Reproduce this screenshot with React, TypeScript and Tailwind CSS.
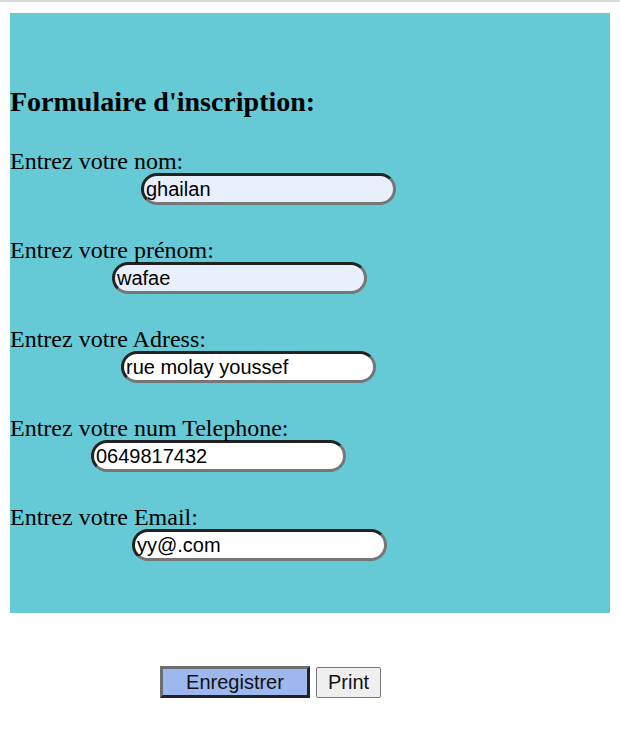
import React from "react";

const rows = [
  { label: "Entrez votre nom:", value: "ghailan", ml: "ml-[131px]", bg: "bg-[#e8f0fe]" },
  { label: "Entrez votre prénom:", value: "wafae", ml: "ml-[102px]", bg: "bg-[#e8f0fe]" },
  { label: "Entrez votre Adress:", value: "rue molay youssef", ml: "ml-[111px]", bg: "bg-white" },
  { label: "Entrez votre num Telephone:", value: "0649817432", ml: "ml-[81px]", bg: "bg-white" },
  { label: "Entrez votre Email:", value: "yy@.com", ml: "ml-[122px]", bg: "bg-white" },
];

export default function App() {
  return (
    <div className="w-[620px] h-[756px] bg-white" style={{ fontFamily: '"Liberation Serif", "Times New Roman", serif' }}>
      <div className="h-[2px] bg-[#dadadd]" />
      <div className="ml-[10px] mt-[11px] w-[600px] h-[600px] bg-[#66c9d6] pt-[75px] text-black">
        <h2 className="text-[28px] font-bold leading-[28px] h-[28px]">Formulaire d'inscription:</h2>
        <div className="mt-[33px]">
          {rows.map((r) => (
            <div key={r.label} className="mb-[33px]">
              <div className="text-[24px] leading-[24px] h-[24px]">{r.label}</div>
              <div
                className={`${r.ml} ${r.bg} w-[255px] h-[32px] rounded-full border-[3px] border-t-[#222] border-l-[#222] border-b-[#767676] border-r-[#767676] pl-[2px] flex items-center text-[20px] leading-none text-black`}
                style={{ fontFamily: '"Liberation Sans", Arial, sans-serif' }}
              >
                {r.value}
              </div>
            </div>
          ))}
        </div>
      </div>
      <div className="mt-[53px] ml-[160px] flex items-end" style={{ fontFamily: '"Liberation Sans", Arial, sans-serif' }}>
        <button className="w-[150px] h-[32px] bg-[#9db8ee] border-[3px] border-t-[#6e6e6e] border-l-[#6e6e6e] border-b-[#222] border-r-[#222] text-[20px] leading-none text-[#111] flex items-center justify-center">
          Enregistrer
        </button>
        <button className="ml-[6px] w-[65px] h-[31px] bg-[#efefef] border border-[#767676] rounded-[2px] text-[20px] leading-none text-[#111] flex items-center justify-center pb-[2px]">
          Print
        </button>
      </div>
    </div>
  );
}
